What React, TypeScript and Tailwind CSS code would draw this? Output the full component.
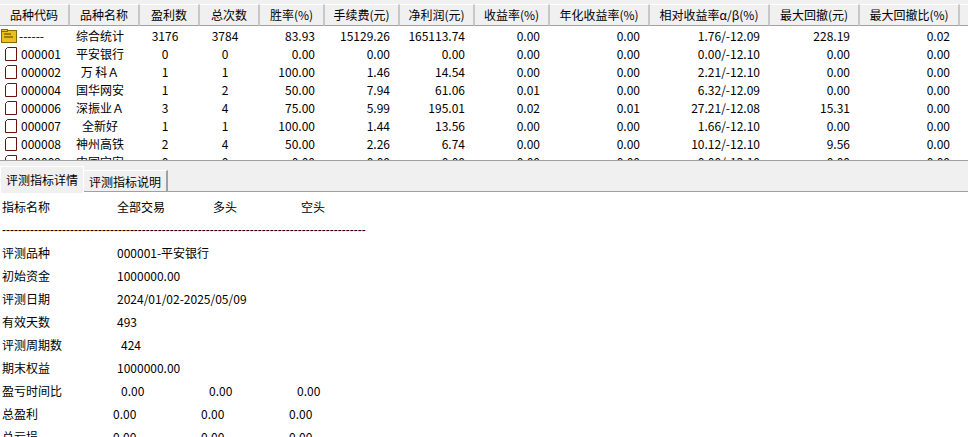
import React from "react";

const cols = [
  { t: "品种代码", w: 70, a: "left" },
  { t: "品种名称", w: 70, a: "center" },
  { t: "盈利数", w: 60, a: "center" },
  { t: "总次数", w: 60, a: "center" },
  { t: "胜率(%)", w: 65, a: "right" },
  { t: "手续费(元)", w: 75, a: "right" },
  { t: "净利润(元)", w: 75, a: "right" },
  { t: "收益率(%)", w: 75, a: "right" },
  { t: "年化收益率(%)", w: 100, a: "right" },
  { t: "相对收益率α/β(%)", w: 120, a: "right" },
  { t: "最大回撤(元)", w: 90, a: "right" },
  { t: "最大回撤比(%)", w: 100, a: "right" },
  { t: "", w: 40, a: "right" },
];

const rows = [
  ["------", "综合统计", "3176", "3784", "83.93", "15129.26", "165113.74", "0.00", "0.00", "1.76/-12.09", "228.19", "0.02"],
  ["000001", "平安银行", "0", "0", "0.00", "0.00", "0.00", "0.00", "0.00", "0.00/-12.10", "0.00", "0.00"],
  ["000002", "万 科Ａ", "1", "1", "100.00", "1.46", "14.54", "0.00", "0.00", "2.21/-12.10", "0.00", "0.00"],
  ["000004", "国华网安", "1", "2", "50.00", "7.94", "61.06", "0.01", "0.00", "6.32/-12.09", "0.00", "0.00"],
  ["000006", "深振业Ａ", "3", "4", "75.00", "5.99", "195.01", "0.02", "0.01", "27.21/-12.08", "15.31", "0.00"],
  ["000007", "全新好", "1", "1", "100.00", "1.44", "13.56", "0.00", "0.00", "1.66/-12.10", "0.00", "0.00"],
  ["000008", "神州高铁", "2", "4", "50.00", "2.26", "6.74", "0.00", "0.00", "10.12/-12.10", "9.56", "0.00"],
  ["000009", "中国宝安", "0", "0", "0.00", "0.00", "0.00", "0.00", "0.00", "0.00/-12.10", "0.00", "0.00"],
];

const font = { fontFamily: '"Noto Sans CJK SC", "Noto Sans", sans-serif' };

function DocIcon({ folder }: { folder?: boolean }) {
  if (folder)
    return (
      <svg width="16" height="14" viewBox="0 0 16 14" className="mr-[2px] shrink-0">
        <rect x="0.5" y="1.5" width="15" height="12" fill="#e8c020" stroke="#8a6a00" />
        <rect x="0.5" y="0.5" width="6" height="2" fill="#e8c020" stroke="#8a6a00" />
        <line x1="3" y1="5" x2="10" y2="5" stroke="#5a3a00" />
        <line x1="3" y1="8" x2="12" y2="8" stroke="#5a3a00" />
      </svg>
    );
  return (
    <svg width="14" height="14" viewBox="0 0 14 14" className="mr-[3px] ml-[3px] shrink-0">
      <path d="M1.5 2.5 L3.5 0.5 L12.5 0.5 L12.5 13.5 L1.5 13.5 Z" fill="#fff" stroke="#6a1010" />
    </svg>
  );
}

const detail: [string, string, string, string, number][] = [
  ["评测品种", "000001-平安银行", "", "", 117],
  ["初始资金", "1000000.00", "", "", 117],
  ["评测日期", "2024/01/02-2025/05/09", "", "", 117],
  ["有效天数", "493", "", "", 117],
  ["评测周期数", "424", "", "", 121],
  ["期末权益", "1000000.00", "", "", 117],
  ["盈亏时间比", "0.00", "0.00", "0.00", 121],
  ["总盈利", "0.00", "0.00", "0.00", 113],
  ["总亏损", "0.00", "0.00", "0.00", 113],
];

export default function App() {
  return (
    <div className="w-[968px] h-[437px] overflow-hidden bg-white text-[12px] text-black" style={font}>
      <div className="h-[160px] overflow-hidden bg-white">
        <div className="h-[4px] bg-[#f0f0f0]" />
        <div className="flex h-[22px] bg-[#f0f0f0]">
          {cols.map((c, i) => (
            <div
              key={i}
              style={{ width: c.w }}
              className="shrink-0 flex items-center justify-center border-r-2 border-b border-r-[#c8c8c8] border-b-[#a0a0a0] border-t border-t-white text-[12px] leading-none"
            >
              {c.t}
            </div>
          ))}
        </div>
        <div className="pt-[1px]">
          {rows.map((r, ri) => (
            <div key={ri} className="flex h-[18px] items-center leading-none">
              {r.map((v, ci) => {
                const c = cols[ci];
                if (ci === 0)
                  return (
                    <div key={ci} style={{ width: c.w }} className="flex items-center pl-[1px] shrink-0">
                      <DocIcon folder={ri === 0} />
                      {v}
                    </div>
                  );
                return (
                  <div
                    key={ci}
                    style={{ width: c.w }}
                    className={`shrink-0 pr-[10px] ${c.a === "center" ? "text-center pr-[0px]" : "text-right"}`}
                  >
                    {v}
                  </div>
                );
              })}
            </div>
          ))}
        </div>
      </div>
      <div className="h-[32px] bg-[#f0f0f0] border-t border-[#a0a0a0] flex items-end relative">
        <div className="h-[27px] w-[84px] bg-[#f0f0f0] border-t border-l border-r border-white flex items-center justify-center text-[12px] relative top-[1px] z-10">
          评测指标详情
        </div>
        <div className="h-[22px] w-[84px] bg-[#f0f0f0] border-t border-white border-r-2 border-r-[#a0a0a0] flex items-center justify-center text-[12px]">
          评测指标说明
        </div>
        <div className="absolute left-0 right-0 bottom-0 h-[1px] bg-[#a0a0a0]" />
      </div>
      <div className="pl-[2px] leading-none">
        <div className="flex h-[23px] items-center mt-[3px]">
          <span className="w-[115px]">指标名称</span>
          <span className="w-[96px]">全部交易</span>
          <span className="w-[88px]">多头</span>
          <span>空头</span>
        </div>
        <div className="h-[23px] flex items-center whitespace-pre overflow-hidden" style={{ fontFamily: '"Liberation Sans", sans-serif' }}>
          {"-".repeat(91)}
        </div>
        {detail.map(([a, b, c, d, x], i) => (
          <div key={i} className="flex h-[23px] items-center whitespace-pre">
            <span style={{ width: x - 2 }} className="shrink-0">{a}</span>
            <span className="w-[88px] shrink-0">{b}</span>
            <span className="w-[88px] shrink-0">{c}</span>
            <span>{d}</span>
          </div>
        ))}
      </div>
    </div>
  );
}
